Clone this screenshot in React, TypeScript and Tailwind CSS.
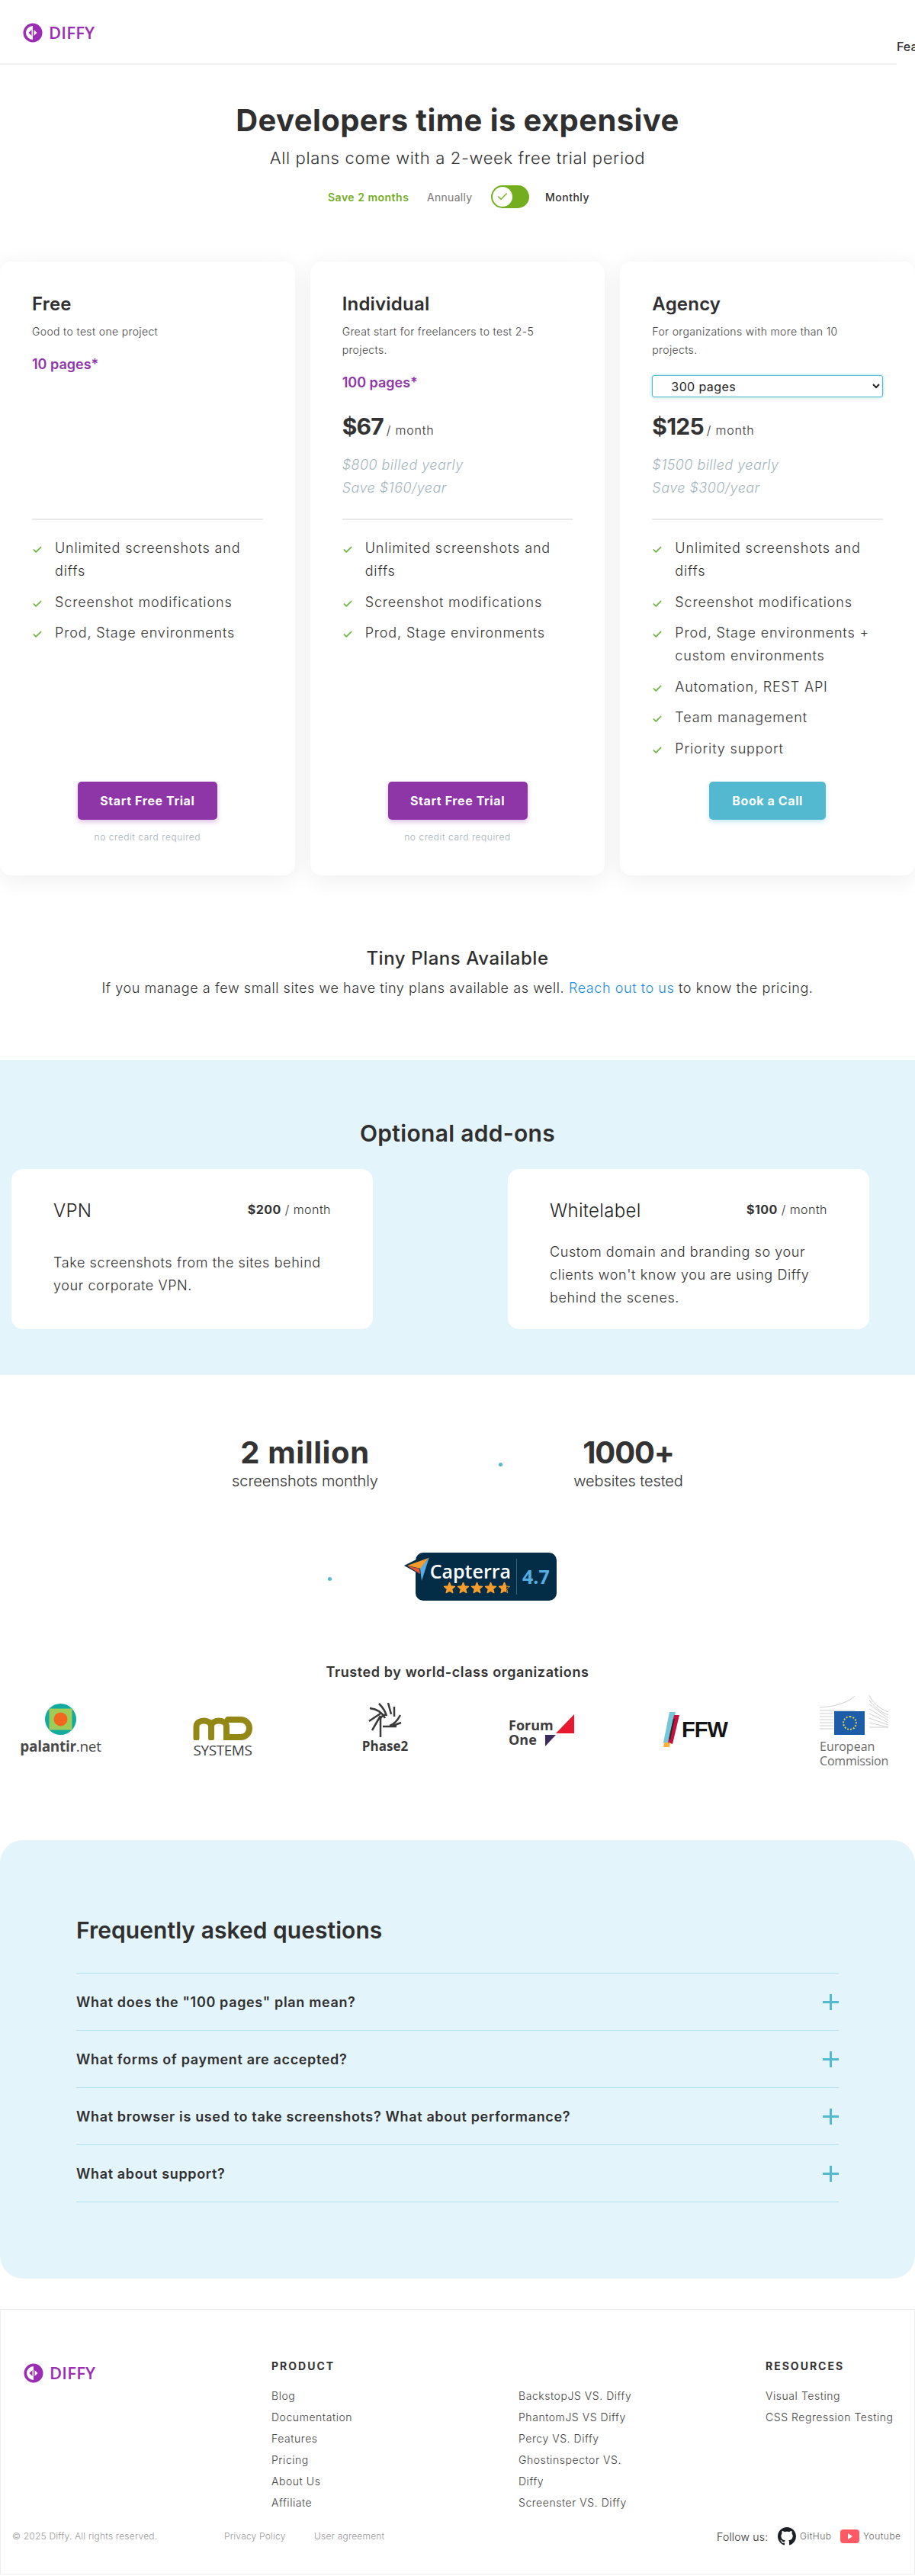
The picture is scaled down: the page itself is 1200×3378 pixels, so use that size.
import { Check } from 'lucide-react'

const plans = [
  {
    name: 'Free',
    desc: 'Good to test one project',
    pages: '10 pages*',
    features: ['Unlimited screenshots and diffs', 'Screenshot modifications', 'Prod, Stage environments'],
    cta: 'Start Free Trial',
    note: true,
  },
  {
    name: 'Individual',
    desc: 'Great start for freelancers to test 2-5 projects.',
    pages: '100 pages*',
    price: '$67',
    billed: '$800 billed yearly',
    save: 'Save $160/year',
    features: ['Unlimited screenshots and diffs', 'Screenshot modifications', 'Prod, Stage environments'],
    cta: 'Start Free Trial',
    note: true,
  },
  {
    name: 'Agency',
    desc: 'For organizations with more than 10 projects.',
    select: true,
    price: '$125',
    billed: '$1500 billed yearly',
    save: 'Save $300/year',
    features: [
      'Unlimited screenshots and diffs',
      'Screenshot modifications',
      'Prod, Stage environments + custom environments',
      'Automation, REST API',
      'Team management',
      'Priority support',
    ],
    cta: 'Book a Call',
    note: false,
  },
]

const faqs = [
  'What does the "100 pages" plan mean?',
  'What forms of payment are accepted?',
  'What browser is used to take screenshots? What about performance?',
  'What about support?',
]

const productLinks = ['Blog', 'Documentation', 'Features', 'Pricing', 'About Us', 'Affiliate']
const compareLinks = ['BackstopJS VS. Diffy', 'PhantomJS VS Diffy', 'Percy VS. Diffy', 'Ghostinspector VS. Diffy', 'Screenster VS. Diffy']

const starPath = 'M12 2 L15 9 L22.500 9.700 L16.800 14.700 L18.500 22 L12 18.200 L5.500 22 L7.200 14.700 L1.500 9.700 L9 9 Z'

function Logo() {
  return (
    <div className="flex items-center gap-[8px] h-[25px]">
      <svg width="26" height="26" viewBox="0 0 26 26">
        <circle cx="13" cy="13" r="12.500" fill="#9b2db5" />
        <path d="M13 4 A9 9 0 0 0 13 22 Z" fill="#fff" />
        <path d="M11.500 9 L7.500 13 L11.500 17 Z" fill="#9b2db5" />
        <path d="M14.500 9 L18.500 13 L14.500 17 Z" fill="#fff" />
      </svg>
      <span className="font-['Open_Sans',sans-serif] text-[22px] leading-[25px] font-semibold text-[#9b2db5] tracking-[0.2px]">DIFFY</span>
    </div>
  )
}

function PlanCard({ plan }: { plan: (typeof plans)[number] }) {
  return (
    <div className="w-[386.67px] h-[805px] bg-white rounded-[15px] shadow-[0_5px_30px_rgba(0,0,0,0.07)] px-[42px] pt-[38px] flex flex-col">
      <div className="h-[299px]">
        <h3 className="text-[24px] leading-[36px] font-semibold text-[#2f2f2f] tracking-[0.2px]">{plan.name}</h3>
        <p className="mt-[6px] text-[14px] leading-[24px] text-[#444] font-light tracking-[0.35px]">{plan.desc}</p>
        {plan.pages && <p className="mt-[17px] text-[18px] leading-[28px] font-semibold text-[#8e35a8]">{plan.pages}</p>}
        {plan.select && (
          <select className="mt-[21px] w-[303px] h-[29px] pl-[20px] bg-white rounded-[3px] border border-[#52b9d0] shadow-[0_0_4px_rgba(82,185,208,0.6)] text-[16px] text-[#222] tracking-[0.4px]">
            <option>300 pages</option>
          </select>
        )}
        {plan.price && (
          <div className={`${plan.select ? 'mt-[18px]' : 'mt-[23px]'} h-[40px] leading-[40px] text-[#333]`}>
            <span className="text-[30px] font-bold tracking-[-0.8px]">{plan.price}</span>
            <span className="ml-[4px] text-[16px] font-light tracking-[0.8px]">/ month</span>
          </div>
        )}
        {plan.billed && (
          <div className="mt-[16px] text-[18px] leading-[30px] italic font-light text-[#a3b6bd] tracking-[0.45px]">
            <p>{plan.billed}</p>
            <p>{plan.save}</p>
          </div>
        )}
      </div>
      <div className="h-[2px] bg-[#e9e9ea]" />
      <ul className="mt-[22px] flex-1 flex flex-col gap-[10.5px]">
        {plan.features.map(f => (
          <li key={f} className="flex text-[18px] leading-[30px] font-light text-[#333] tracking-[0.85px]">
            <Check className="w-[14px] h-[14px] mt-[10px] mr-[16px] shrink-0 text-[#6cb33f]" strokeWidth={3} />
            <span>{f}</span>
          </li>
        ))}
      </ul>
      <div className="h-[123px] flex flex-col items-center shrink-0">
        <a className={`h-[50px] rounded-[5px] flex items-center justify-center text-white text-[16px] font-bold tracking-[0.6px] ${plan.note ? 'w-[183px] bg-[#8e35a8] shadow-[0_3px_6px_rgba(142,53,168,0.3)]' : 'w-[153px] bg-[#52b9d0] shadow-[0_3px_6px_rgba(82,185,208,0.3)]'}`}>
          {plan.cta}
        </a>
        {plan.note && <p className="mt-[14px] text-[12px] leading-[18px] font-light text-[#a3b1b6] tracking-[0.55px]">no credit card required</p>}
      </div>
    </div>
  )
}

function Capterra() {
  return (
    <div className="relative ml-[545px] mt-[81px] w-[185px] h-[63px] bg-[#032c47] rounded-[10px] flex items-center">
      <svg className="absolute left-[-15px] top-[6px]" width="36" height="34" viewBox="0 0 36 34">
        <path d="M0 11 L16 3 L16 20 Z" fill="#032c47" />
        <path d="M4 11 L32 1 L22 15 Z" fill="#f89c2b" />
        <path d="M4 11.500 L20 15 L21 22 Z" fill="#e4553a" />
        <path d="M33 0 L21 15 L23 31 Z" fill="#54aee1" />
      </svg>
      <div className="ml-[20px] w-[105px] flex flex-col items-end">
        <span className="font-['Open_Sans',sans-serif] text-[25px] leading-[28px] font-semibold text-white">Capterra</span>
        <span className="flex gap-[1px] pr-[0px]">
          {[0, 1, 2, 3].map(i => (
            <svg key={i} width="17" height="16" viewBox="0 0 24 24">
              <path d={starPath} fill="#f89c2b" stroke="#f89c2b" strokeWidth="2" strokeLinejoin="round" />
            </svg>
          ))}
          <svg width="17" height="16" viewBox="0 0 24 24">
            <path d={starPath} fill="none" stroke="#c9923f" strokeWidth="1.500" strokeLinejoin="round" />
            <path d="M12 2 L9 9 L1.500 9.700 L7.200 14.700 L5.500 22 L12 18.200 L15 20 L15 9 Z" fill="#f89c2b" stroke="#f89c2b" strokeWidth="2" strokeLinejoin="round" />
          </svg>
        </span>
      </div>
      <div className="w-px h-[47px] ml-[7px] bg-[#3d6178]" />
      <span className="ml-[7px] font-['Open_Sans',sans-serif] text-[25px] font-bold text-[#54aee1]">4.7</span>
    </div>
  )
}

function ClientLogos() {
  return (
    <div className="flex items-start h-[206px] font-['Open_Sans',sans-serif]">
      <div className="ml-[29px] mt-[27px] w-[101px] flex flex-col items-center">
        <svg width="41" height="41" viewBox="0 0 41 41">
          <ellipse cx="20.500" cy="20.500" rx="20.500" ry="20.500" fill="#13aba0" />
          <rect x="5.500" y="6.500" width="30" height="28" fill="#9fcb57" />
          <circle cx="20.500" cy="20.500" r="9" fill="#f2671f" />
        </svg>
        <span className="mt-[3px] text-[19px] leading-[24px] font-bold text-[#4a4a4a] tracking-[-0.3px]">
          palantir<span className="font-normal">.net</span>
        </span>
      </div>
      <div className="ml-[123px] mt-[43px] w-[78px] flex flex-col items-center">
        <svg width="78" height="32" viewBox="0 0 78 32">
          <path d="M4.500 29 V14 C4.500 4 24 4 24 14 V29 M24 14 C24 4 44 4 44 14 V28 H62 C78 28 78 5 62 5 H46" fill="none" stroke="#938815" strokeWidth="8" strokeLinecap="round" />
        </svg>
        <span className="mt-[1px] text-[19px] leading-[24px] text-[#3f3f3f] tracking-[-0.4px] whitespace-nowrap">SYSTEMS</span>
      </div>
      <div className="ml-[141px] mt-[26px] w-[66px] flex flex-col items-center">
        <svg width="44" height="46" viewBox="0 0 44 46" fill="none" stroke="#3a3a3a" strokeWidth="2.500">
          <path d="M16 45 V22 C16 18 19 16 24 15 M1 24 L16 14 M5 36 L16 17 M2 7 C10 8 18 12 22 20 M14 1 C18 5 22 10 24 17 M26 0 L30 15 M34 5 L34 18 M42 16 C38 24 34 28 28 30 M43 26 L32 30 M19 31 H37" />
        </svg>
        <span className="mt-[1px] text-[17px] leading-[20px] font-bold text-[#3a3a3a]">Phase2</span>
      </div>
      <div className="ml-[129px] mt-[41px] w-[87px] relative h-[40px]">
        <div className="text-[18px] leading-[19px] font-bold text-[#3d3d3d] pt-[5px]">
          Forum
          <br />
          One
        </div>
        <svg className="absolute left-[46px] top-0" width="42" height="42" viewBox="0 0 42 42">
          <path d="M40 0 V25 H16 Z" fill="#e8192f" />
          <path d="M2 27 H16 L2 42 Z" fill="#3c2a5c" />
        </svg>
      </div>
      <div className="ml-[116px] mt-[38px] w-[90px] relative h-[46px] flex items-center">
        <svg width="22" height="46" viewBox="0 0 22 46">
          <path d="M0 40 L8 0 H16 L7 40 Z" fill="#73c7d8" />
          <path d="M6 40 L14 4 H21 L12 42 Z" fill="#c3123e" />
          <path d="M7 36 L13 9 H15 L9 36 Z" fill="#2a2a2a" />
          <path d="M1 40 H9 L8 46 H0 Z" fill="#fbb03b" />
        </svg>
        <span className="ml-[2px] text-[29px] leading-[30px] font-bold text-[#141414] tracking-[-1px] [font-family:'Liberation_Sans',sans-serif]">FFW</span>
      </div>
      <div className="ml-[115px] mt-[16px] w-[90px] flex flex-col">
        <div className="h-[46px]">
          <svg width="90" height="46" viewBox="0 0 90 46" fill="none" stroke="#cfcfcf" strokeWidth="1">
            <path d="M0 16 C16 15 34 12 46 1 M0 20 H46 M0 24 H18 M0 28 H18 M0 32 H18 M0 36 H18 M0 40 H18 M0 44 H18 M65 0 C68 8 78 18 90 22 M65 6 C70 14 80 22 90 26 M65 12 L90 30 M65 18 L90 33 M65 24 L90 36 M65 30 L90 39 M65 36 L90 42 M65 42 H90" />
          </svg>
        </div>
        <div className="mt-[-25px] ml-[19px] w-[40px] h-[31px] bg-[#1c5ca8] flex items-center justify-center relative">
          <div className="w-[19px] h-[19px] rounded-full border-[2px] border-dotted border-[#e3d93b]" />
        </div>
        <span className="mt-[6px] text-[16px] leading-[19px] text-[#6b6b6b] whitespace-nowrap">European</span>
        <span className="text-[16px] leading-[19px] text-[#6b6b6b] whitespace-nowrap tracking-[-0.2px]">Commission</span>
      </div>
    </div>
  )
}

export default function App() {
  return (
    <div className="relative w-[1200px] overflow-hidden bg-white font-['Inter',sans-serif] text-[#333]">
      {/* top bar, nav is pushed off the right edge */}
      <header className="w-[1176px] h-[85px] border-b-2 border-[#f3f3f4] flex justify-between">
        <div className="ml-[30px] mt-[30px]">
          <Logo />
        </div>
        <nav className="w-0 mt-[50px] text-[16px] leading-[22px] font-medium text-[#333] whitespace-nowrap">Features</nav>
      </header>

      <section className="text-center">
        <h1 className="mt-[48px] text-[40px] leading-[50px] font-bold text-[#2f2f2f] tracking-[0.4px]">Developers time is expensive</h1>
        <p className="mt-[8px] text-[22px] leading-[32px] font-light text-[#333] tracking-[0.65px]">All plans come with a 2-week free trial period</p>
        <div className="mt-[20px] h-[30px] flex items-center text-[14px]">
          <span className="ml-[430px] w-[130px] text-left font-semibold text-[#72ae1e] tracking-[0.5px]">Save 2 months</span>
          <span className="w-[84px] text-left text-[#777] tracking-[0.3px]">Annually</span>
          <span className="w-[50px] h-[30px] rounded-full bg-[#72ae1e] flex items-center pl-[2px]">
            <span className="w-[26px] h-[26px] rounded-full bg-white flex items-center justify-center">
              <Check className="w-[16px] h-[16px] text-[#72ae1e]" strokeWidth={2} />
            </span>
          </span>
          <span className="ml-[21px] font-medium text-[#333] tracking-[0.5px]">Monthly</span>
        </div>
      </section>

      <section className="mt-[70px] flex justify-between">
        {plans.map(p => (
          <PlanCard key={p.name} plan={p} />
        ))}
      </section>

      <section className="mt-[91px] text-center">
        <h3 className="text-[24px] leading-[36px] font-medium text-[#2f2f2f] tracking-[0.55px]">Tiny Plans Available</h3>
        <p className="mt-[6px] text-[18px] leading-[30px] font-light text-[#2f2f2f] tracking-[0.57px]">
          If you manage a few small sites we have tiny plans available as well. <a className="text-[#1a8ae0]">Reach out to us</a> to know the pricing.
        </p>
      </section>

      <section className="mt-[79px] h-[413px] bg-[#e4f4fb] pt-[76px]">
        <h2 className="text-center text-[30px] leading-[40px] font-semibold text-[#2f2f2f] tracking-[0.3px]">Optional add-ons</h2>
        <div className="mt-[27px] ml-[15px] flex gap-[177px]">
          <div className="w-[474px] h-[210px] bg-white rounded-[15px] px-[55px] pt-[37px]">
            <div className="flex justify-between leading-[36px]">
              <span className="text-[24px] font-light text-[#222] tracking-[0.3px]">VPN</span>
              <span className="text-[16px] font-light leading-[32px] tracking-[0.45px]"><b className="font-bold">$200</b> / month</span>
            </div>
            <p className="mt-[35px] text-[18px] leading-[30px] font-light text-[#2f2f2f] tracking-[0.6px]">Take screenshots from the sites behind your corporate VPN.</p>
          </div>
          <div className="w-[474px] h-[210px] bg-white rounded-[15px] px-[55px] pt-[37px]">
            <div className="flex justify-between leading-[36px]">
              <span className="text-[24px] font-light text-[#222] tracking-[0.3px]">Whitelabel</span>
              <span className="text-[16px] font-light leading-[32px] tracking-[0.45px]"><b className="font-bold">$100</b> / month</span>
            </div>
            <p className="mt-[21px] text-[18px] leading-[30px] font-light text-[#2f2f2f] tracking-[0.6px]">Custom domain and branding so your clients won't know you are using Diffy behind the scenes.</p>
          </div>
        </div>
      </section>

      <section className="relative">
        <div className="pt-[78px] ml-[300px] flex gap-[224px] text-center">
          <div className="w-[200px]">
            <p className="text-[40px] leading-[48px] font-bold text-[#333] tracking-[0.6px]">2 million</p>
            <p className="text-[20px] leading-[26px] font-light tracking-[-0.1px] whitespace-nowrap">screenshots monthly</p>
          </div>
          <div className="w-[200px]">
            <p className="text-[40px] leading-[48px] font-bold text-[#333] tracking-[-1.200px]">1000+</p>
            <p className="text-[20px] leading-[26px] font-light tracking-[-0.1px] whitespace-nowrap">websites tested</p>
          </div>
        </div>
        <span className="absolute left-[654px] top-[115px] w-[5px] h-[5px] rounded-full bg-[#52b9d0]" />
        <span className="absolute left-[430px] top-[265px] w-[5px] h-[5px] rounded-full bg-[#52b9d0]" />
        <Capterra />
        <h3 className="mt-[80px] text-center text-[18px] leading-[28px] font-semibold text-[#333] tracking-[0.6px]">Trusted by world-class organizations</h3>
        <ClientLogos />
      </section>

      <section className="h-[575px] rounded-[30px] bg-[#e4f4fb] px-[100px] pt-[98px]">
        <h2 className="text-[30px] leading-[40px] font-semibold text-[#2f2f2f] tracking-[0.05px]">Frequently asked questions</h2>
        <div className="mt-[36px] border-t border-[#b5e2ee]">
          {faqs.map(q => (
            <div key={q} className="h-[75px] border-b border-[#b5e2ee] flex items-center justify-between text-[18px] font-semibold text-[#2f2f2f] tracking-[0.65px]">
              <span>{q}</span>
              <svg width="21" height="21" viewBox="0 0 21 21" fill="none" stroke="#52b9d0" strokeWidth="3">
                <path d="M10.500 0 V21 M0 10.500 H21" />
              </svg>
            </div>
          ))}
        </div>
      </section>

      <footer className="mt-[40px] h-[348px] border border-[#eeeeee] text-[14px] text-[#444]">
        <div className="flex pt-[64px]">
          <div className="ml-[30px] w-[325px] pt-[6px]">
            <Logo />
          </div>
          <div className="w-[324px]">
            <h4 className="h-[20px] text-[14px] leading-[20px] font-bold text-[#333] tracking-[2px]">PRODUCT</h4>
            <ul className="mt-[15px] leading-[28px] font-light tracking-[0.55px]">
              {productLinks.map(l => (
                <li key={l}>{l}</li>
              ))}
            </ul>
          </div>
          <div className="w-[324px]">
            <ul className="mt-[35px] w-[150px] leading-[28px] font-light tracking-[0.55px]">
              {compareLinks.map(l => (
                <li key={l}>{l}</li>
              ))}
            </ul>
          </div>
          <div className="whitespace-nowrap">
            <h4 className="h-[20px] text-[14px] leading-[20px] font-bold text-[#333] tracking-[2px]">RESOURCES</h4>
            <ul className="mt-[15px] leading-[28px] font-light tracking-[0.55px]">
              <li>Visual Testing</li>
              <li>CSS Regression Testing</li>
            </ul>
          </div>
        </div>
        <div className="mt-[15px] h-[30px] flex items-center text-[12px] font-light text-[#999] tracking-[0.2px]">
          <span className="ml-[15px] w-[278px]">© 2025 Diffy. All rights reserved.</span>
          <span className="w-[118px]">Privacy Policy</span>
          <span className="w-[528px]">User agreement</span>
          <span className="w-[80px] text-[14px] font-light text-[#333]">Follow us:</span>
          <svg width="24" height="24" viewBox="0 0 16 16" fill="#1b1f23">
            <path d="M8 0C3.580 0 0 3.580 0 8c0 3.540 2.290 6.530 5.470 7.590.4.070.55-.17.55-.38 0-.19-.01-.82-.01-1.490-2.010.37-2.530-.49-2.690-.94-.09-.23-.48-.94-.82-1.130-.28-.15-.68-.52-.01-.53.63-.01 1.080.58 1.230.82.720 1.210 1.870.870 2.330.660.070-.520.280-.870.510-1.070-1.780-.2-3.640-.890-3.640-3.950 0-.870.310-1.590.820-2.150-.08-.2-.36-1.020.08-2.120 0 0 .670-.210 2.200.820.640-.18 1.320-.270 2-.270s1.360.090 2 .270c1.530-1.040 2.200-.820 2.200-.820.440 1.100.160 1.920.080 2.120.510.560.820 1.270.820 2.150 0 3.070-1.870 3.750-3.650 3.950.290.250.540.730.540 1.480 0 1.070-.010 1.930-.010 2.200 0 .210.150.460.550.380A8.010 8.010 0 0 0 16 8c0-4.420-3.580-8-8-8z" />
          </svg>
          <span className="ml-[5px] w-[53px] text-[#666] tracking-[0.5px]">GitHub</span>
          <svg width="25" height="18" viewBox="0 0 25 18">
            <rect width="25" height="18" rx="4" fill="#ff5a64" />
            <path d="M10 5 L16 9 L10 13 Z" fill="#fff" />
          </svg>
          <span className="ml-[5px] text-[#666] tracking-[0.5px]">Youtube</span>
        </div>
      </footer>
    </div>
  )
}
